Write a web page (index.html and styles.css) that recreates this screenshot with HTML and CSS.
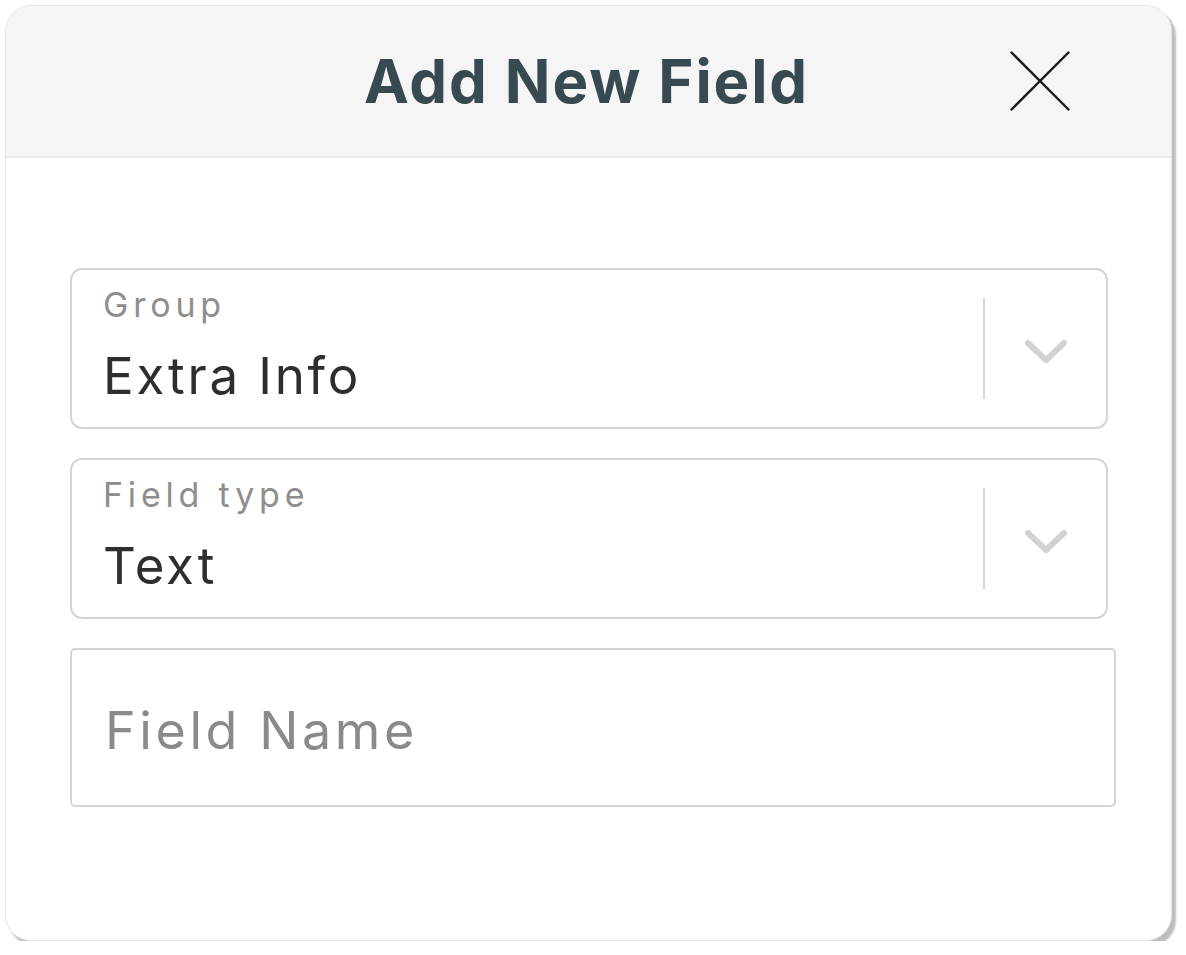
FILE: index.html
```html
<!DOCTYPE html>
<html lang="en">
<head>
<meta charset="utf-8">
<title>Add New Field</title>
<link rel="stylesheet" href="styles.css">
</head>
<body>
<div class="modal">
  <div class="modal-header">
    <span class="spacer"></span>
    <h1 class="title">Add New Field</h1>
    <button class="close" aria-label="Close">
      <svg width="60" height="60" viewBox="0 0 60 60"><path d="M1.5 1.5 L58.5 58.5 M58.5 1.5 L1.5 58.5" stroke="#1a1a1a" stroke-width="2.4" fill="none" stroke-linecap="round"/></svg>
    </button>
  </div>
  <div class="modal-body">
    <div class="select-field">
      <div class="select-main">
        <div class="select-label">Group</div>
        <div class="select-value">Extra Info</div>
      </div>
      <div class="select-sep"></div>
      <div class="select-arrow">
        <svg width="44" height="26" viewBox="0 0 44 26"><polyline points="4,4 22,21 40,4" fill="none" stroke="#d2d2d2" stroke-width="6" stroke-linecap="round" stroke-linejoin="round"/></svg>
      </div>
    </div>
    <div class="select-field">
      <div class="select-main">
        <div class="select-label">Field type</div>
        <div class="select-value">Text</div>
      </div>
      <div class="select-sep"></div>
      <div class="select-arrow">
        <svg width="44" height="26" viewBox="0 0 44 26"><polyline points="4,4 22,21 40,4" fill="none" stroke="#d2d2d2" stroke-width="6" stroke-linecap="round" stroke-linejoin="round"/></svg>
      </div>
    </div>
    <div class="text-field">
      <span class="placeholder">Field Name</span>
    </div>
  </div>
</div>
</body>
</html>
```

FILE: styles.css
```css
* { box-sizing: border-box; }

body {
  margin: 0;
  background: #ffffff;
  font-family: Inter, "Open Sans", "DejaVu Sans", sans-serif;
}

.modal {
  margin: 5px 0 0 5px;
  width: 1167px;
  height: 936px;
  border: 1px solid #e4e4e4;
  border-radius: 26px;
  background: #ffffff;
  box-shadow: 4px 5px 2px rgba(0, 0, 0, 0.26);
  overflow: hidden;
}

.modal-header {
  height: 152px;
  background: #f5f5f5;
  border-bottom: 2px solid #ebebeb;
  display: grid;
  grid-template-columns: 1fr auto 1fr;
  align-items: center;
}

.title {
  margin: 0 0 0 -4px;
  font-size: 60px;
  line-height: 72px;
  font-weight: 700;
  color: #384a51;
  letter-spacing: 1.9px;
}

.close {
  justify-self: end;
  margin-right: 101px;
  padding: 0;
  border: 0;
  background: none;
  width: 60px;
  height: 60px;
  display: block;
}

.close svg { display: block; }

.modal-body {
  padding: 110px 63px 0 64px;
  display: flex;
  flex-direction: column;
  gap: 29px;
}

.select-field {
  height: 161px;
  border: 2px solid #d4d4d4;
  border-radius: 12px;
  display: flex;
  align-items: center;
}

.select-main {
  flex: 1;
  align-self: stretch;
  padding: 15px 0 0 31px;
}

.select-label {
  font-size: 34px;
  line-height: 40px;
  color: #8e8e8e;
  letter-spacing: 4.8px;
}

.select-value {
  margin-top: 21px;
  font-size: 51px;
  line-height: 60px;
  color: #2e2e2e;
  letter-spacing: 2.8px;
}

.select-sep {
  width: 2px;
  height: 101px;
  background: #d6d6d6;
}

.select-arrow {
  width: 121px;
  display: flex;
  justify-content: center;
  padding-top: 6px;
}

.select-arrow svg { display: block; }

.text-field {
  height: 159px;
  margin-right: -8px;
  border: 2px solid #d4d4d4;
  border-radius: 5px;
  padding: 51px 0 0 33px;
}

.placeholder {
  display: block;
  font-size: 52px;
  line-height: 60px;
  color: #8a8a8a;
  letter-spacing: 3.6px;
}
```
